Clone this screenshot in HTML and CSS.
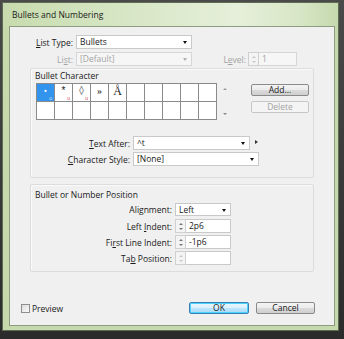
FILE: index.html
```html
<!DOCTYPE html>
<html>
<head>
<meta charset="utf-8">
<link rel="stylesheet" href="styles.css">
</head>
<body>
<div class="screen">
  <div class="window">
    <div class="titlebar">Bullets and Numbering</div>
    <div class="client">
      <div class="row row-1">
        <span class="lbl lbl-top"><u>L</u>ist Type:</span>
        <div class="select sel-list"><span>Bullets</span><i class="arrow"></i></div>
      </div>
      <div class="row row-2">
        <span class="lbl lbl-top disabled">Li<u>s</u>t:</span>
        <div class="select sel-list is-disabled"><span>[Default]</span><i class="arrow"></i></div>
        <span class="lbl lbl-level disabled">L<u>e</u>vel:</span>
        <div class="spin is-disabled"><i class="up"></i><i class="down"></i></div>
        <div class="field field-level is-disabled">1</div>
      </div>

      <div class="group group-1">
        <div class="group-title">Bullet Character</div>
        <div class="char-area">
          <div class="grid">
            <div class="cell selected"><span class="g g-dot">•</span><span class="u">u</span></div>
            <div class="cell"><span class="g g-ast">*</span><span class="u red">u</span></div>
            <div class="cell"><span class="g g-loz">◊</span><span class="u red">u</span></div>
            <div class="cell"><span class="g g-raq">»</span></div>
            <div class="cell"><span class="g g-a">Å</span></div>
            <div class="cell"></div><div class="cell"></div><div class="cell"></div><div class="cell"></div><div class="cell"></div>
            <div class="cell"></div><div class="cell"></div><div class="cell"></div><div class="cell"></div><div class="cell"></div>
            <div class="cell"></div><div class="cell"></div><div class="cell"></div><div class="cell"></div><div class="cell"></div>
          </div>
          <div class="scroll"><i class="sup"></i><i class="sdown"></i></div>
          <div class="btn-col">
            <div class="btn btn-add">Add...</div>
            <div class="btn btn-del is-disabled">Delete</div>
          </div>
        </div>
        <div class="row row-after">
          <span class="lbl lbl-mid"><u>T</u>ext After:</span>
          <div class="select sel-after"><span>^t</span><i class="arrow"></i></div>
          <i class="flyout"></i>
        </div>
        <div class="row row-style">
          <span class="lbl lbl-mid"><u>C</u>haracter Style:</span>
          <div class="select sel-style"><span>[None]</span><i class="arrow"></i></div>
        </div>
      </div>

      <div class="group group-2">
        <div class="group-title">Bullet or Number Position</div>
        <div class="row row-align">
          <span class="lbl lbl-pos">Ali<u>g</u>nment:</span>
          <div class="select sel-align"><span>Left</span><i class="arrow"></i></div>
        </div>
        <div class="row row-pos">
          <span class="lbl lbl-pos">Left <u>I</u>ndent:</span>
          <div class="spin"><i class="up"></i><i class="down"></i></div>
          <div class="field field-pos">2p6</div>
        </div>
        <div class="row row-pos row-pos-2">
          <span class="lbl lbl-pos">Fi<u>r</u>st Line Indent:</span>
          <div class="spin"><i class="up"></i><i class="down"></i></div>
          <div class="field field-pos">-1p6</div>
        </div>
        <div class="row row-pos row-pos-2">
          <span class="lbl lbl-pos">Ta<u>b</u> Position:</span>
          <div class="spin is-disabled"><i class="up"></i><i class="down"></i></div>
          <div class="field field-pos"></div>
        </div>
      </div>

      <div class="footer">
        <span class="check"></span>
        <span class="check-label">Preview</span>
        <div class="btn btn-ok">OK</div>
        <div class="btn btn-cancel">Cancel</div>
      </div>
    </div>
  </div>
</div>
</body>
</html>
```

FILE: styles.css
```css
* { box-sizing: border-box; }
html, body { margin: 0; padding: 0; }
body {
  width: 344px;
  height: 339px;
  overflow: hidden;
  font-family: "Open Sans", "Liberation Sans", sans-serif;
  font-size: 8.5px;
  color: #1a1a1a;
}
u { text-decoration: underline; text-underline-offset: 1px; text-decoration-thickness: 1px; }

.screen {
  width: 344px;
  height: 339px;
  background: linear-gradient(#4a4a4a, #2b2b2b);
  padding: 2px 5px 8px 2px;
}
.window {
  width: 337px;
  height: 329px;
  border: 1px solid #5f6b52;
  background: #c5d9ad;
  display: flex;
  flex-direction: column;
}
.titlebar {
  height: 24px;
  line-height: 24px;
  padding-left: 9px;
  font-size: 8.5px;
  color: #1a1a1a;
  background: linear-gradient(90deg, #c7dbae 0%, #d6e6c4 35%, #e6efda 70%, #d8e7c7 88%, #c5d9ad 100%);
}
.client {
  margin: 0 4px 5px 7px;
  flex: 1;
  background: #f0f0f0;
  outline: 1px solid #8e9c80;
  display: flex;
  flex-direction: column;
  padding-top: 8px;
}

.row { display: flex; align-items: center; height: 14px; }
.row-2 { margin-top: 3px; }
.lbl { text-align: right; white-space: nowrap; padding-right: 3px; }
.lbl-top { width: 66px; }
.lbl-level { width: 56px; padding-right: 2px; }
.disabled { color: #a3a3a3; }

.select {
  position: relative;
  height: 14px;
  background: #fff;
  border: 1px solid #c9c9c9;
  padding-left: 3px;
  line-height: 12px;
  white-space: nowrap;
}
.select.is-disabled { background: #f6f6f6; color: #a3a3a3; border-color: #d6d6d6; }
.arrow {
  position: absolute;
  right: 4px;
  top: 5px;
  width: 0; height: 0;
  border-left: 2.5px solid transparent;
  border-right: 2.5px solid transparent;
  border-top: 3px solid #111;
}
.is-disabled .arrow { border-top-color: #b0b0b0; }
.sel-list { width: 116px; }

.spin {
  width: 11px;
  height: 14px;
  border: 1px solid #d0d0d0;
  background: #f4f4f4;
  display: flex;
  flex-direction: column;
  align-items: center;
  justify-content: space-around;
  padding: 1px 0;
}
.spin .up, .spin .down {
  width: 0; height: 0;
  border-left: 2px solid transparent;
  border-right: 2px solid transparent;
}
.spin .up { border-bottom: 2px solid #777; }
.spin .down { border-top: 2px solid #777; }
.spin.is-disabled .up { border-bottom-color: #c8c8c8; }
.spin.is-disabled .down { border-top-color: #c8c8c8; }
.field {
  height: 14px;
  background: #fff;
  border: 1px solid #c9c9c9;
  border-left: none;
  padding-left: 3px;
  line-height: 12px;
}
.field.is-disabled { background: #f6f6f6; color: #a3a3a3; border-color: #d6d6d6; }
.field-level { width: 38px; }

.group {
  margin: 0 20px 0 20px;
  border: 1px solid #dcdcdc;
  box-shadow: inset 1px 1px 0 #fafafa;
  border-radius: 2px;
}
.group-1 { margin-top: 2px; height: 110px; }
.group-2 { margin-top: 6px; height: 88px; }
.group-title { padding-left: 4px; line-height: 11px; height: 11px; margin-top: 1px; }
.group-2 .group-title { margin-top: 4px; }

.char-area { display: flex; margin-top: 2px; padding-left: 5px; height: 37px; }
.grid {
  display: grid;
  grid-template-columns: repeat(10, 18px);
  grid-template-rows: repeat(2, 18px);
  width: 181px;
  height: 37px;
  border-left: 1px solid #8a8a8a;
  border-top: 1px solid #8a8a8a;
  background: #fff;
}
.cell {
  position: relative;
  border-right: 1px solid #8a8a8a;
  border-bottom: 1px solid #8a8a8a;
  text-align: center;
}
.cell.selected { background: #3394ee; color: #fff; }
.g { display: block; line-height: 14px; }
.g-dot { font-size: 9px; line-height: 13px; color: #fff; }
.g-ast { font-family: "Liberation Sans", sans-serif; font-size: 10px; line-height: 14px; }
.g-loz { font-family: "DejaVu Sans", sans-serif; font-size: 9px; line-height: 13px; }
.g-raq { font-family: "Liberation Serif", serif; font-size: 10px; line-height: 13px; }
.g-a { font-family: "Liberation Serif", serif; font-size: 12px; line-height: 15px; }
.u {
  position: absolute;
  right: 2px;
  bottom: 0;
  font-family: "Liberation Sans", sans-serif;
  font-size: 5px;
  line-height: 6px;
  color: #cfe3ff;
}
.u.red { color: #d04848; }

.scroll {
  width: 10px;
  margin-left: 3px;
  display: flex;
  flex-direction: column;
  justify-content: space-between;
  align-items: center;
  padding: 5px 0 5px;
}
.sup, .sdown {
  width: 0; height: 0;
  border-left: 2px solid transparent;
  border-right: 2px solid transparent;
}
.sup { border-bottom: 2px solid #9a9a9a; }
.sdown { border-top: 2px solid #888; }

.btn-col { margin-left: 21px; margin-top: 1px; display: flex; flex-direction: column; gap: 5px; }
.btn {
  height: 12px;
  line-height: 10px;
  text-align: center;
  border: 1px solid #8a8a8a;
  border-radius: 2px;
  background: linear-gradient(#f4f4f4 0%, #ebebeb 50%, #dcdcdc 51%, #cfcfcf 100%);
}
.btn-add, .btn-del { width: 58px; }
.btn.is-disabled { border-color: #c6c6c6; background: #f4f4f4; color: #a3a3a3; }

.lbl-mid { width: 102px; }
.row-after { margin-top: 16px; }
.row-style { margin-top: 2px; }
.sel-after { width: 117px; }
.sel-style { width: 126px; }
.flyout {
  margin-left: 5px;
  margin-top: -3px;
  width: 0; height: 0;
  border-top: 2px solid transparent;
  border-bottom: 2px solid transparent;
  border-left: 3px solid #333;
}

.lbl-pos { width: 144px; }
.row-align { margin-top: 3px; height: 13px; }
.sel-align { width: 56px; height: 13px; line-height: 11px; }
.row-pos { margin-top: 3px; }
.row-pos-2 { margin-top: 2px; }
.field-pos { width: 45px; }

.footer {
  display: flex;
  align-items: center;
  margin-top: 30px;
  padding-left: 11px;
  height: 12px;
}
.check {
  width: 9px;
  height: 9px;
  border: 1px solid #8e8e8e;
  background: linear-gradient(135deg, #dcdcdc, #fafafa);
}
.check-label { margin-left: 2px; }
.btn-ok {
  margin-left: auto;
  width: 60px;
  border-color: #3c7fb1;
  background: linear-gradient(#eaf6fd 0%, #d9f0fc 50%, #bee6fd 51%, #a7d9f5 100%);
  box-shadow: inset 0 0 0 1px #48d4fe;
}
.btn-cancel { margin-left: 7px; margin-right: 19px; width: 59px; }
```
